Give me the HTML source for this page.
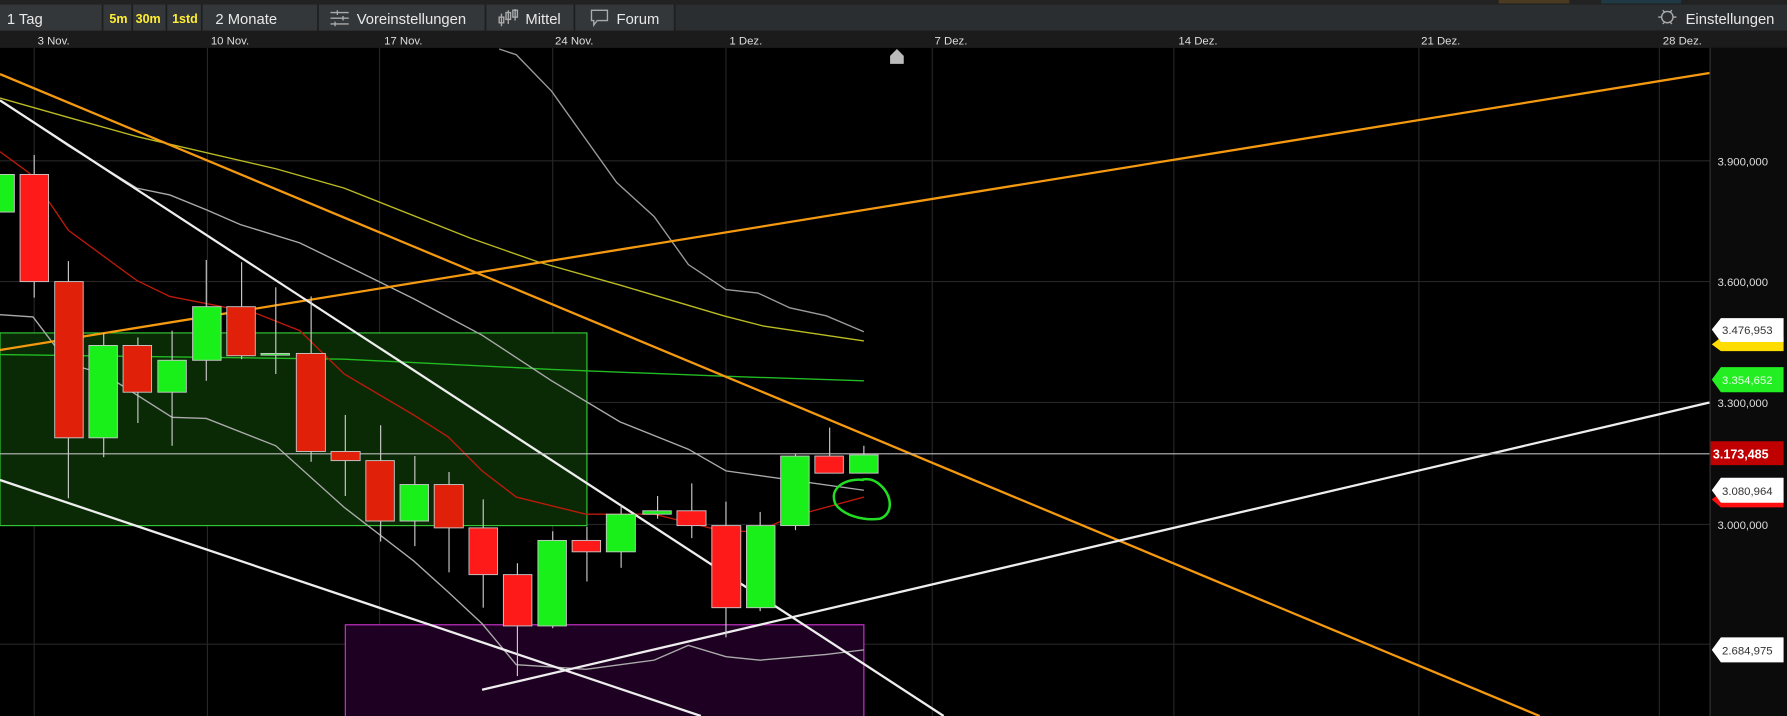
<!DOCTYPE html>
<html><head><meta charset="utf-8"><style>
html,body{margin:0;padding:0;background:#000;overflow:hidden}
svg{display:block}
text{font-family:"Liberation Sans",sans-serif}
</style></head><body>
<svg width="1787" height="716" viewBox="0 0 1568 628" preserveAspectRatio="none" xmlns="http://www.w3.org/2000/svg">
<rect x="0" y="0" width="1568" height="628" fill="#000"/>
<rect x="0" y="0" width="1568" height="4" fill="#222"/>
<rect x="1315" y="0" width="62" height="3" fill="#4a3a20"/>
<rect x="1405" y="0" width="70" height="3" fill="#1f3a44"/>
<rect x="0" y="4" width="1568" height="23" fill="#2b2e31"/>
<rect x="0" y="4" width="592" height="23" fill="#33373a"/>
<g stroke="#1c1e20" stroke-width="1.5">
<line x1="90" y1="4" x2="90" y2="27"/><line x1="116" y1="4" x2="116" y2="27"/>
<line x1="146" y1="4" x2="146" y2="27"/><line x1="177" y1="4" x2="177" y2="27"/>
<line x1="279" y1="4" x2="279" y2="27"/><line x1="426" y1="4" x2="426" y2="27"/>
<line x1="504" y1="4" x2="504" y2="27"/><line x1="592" y1="4" x2="592" y2="27"/>
</g>
<g font-size="13" fill="#e8e8e8">
<text x="6" y="21">1 Tag</text>
<text x="96" y="20" font-size="11" fill="#ffee33" font-weight="bold">5m</text>
<text x="119" y="20" font-size="11" fill="#ffee33" font-weight="bold">30m</text>
<text x="151" y="20" font-size="11" fill="#ffee33" font-weight="bold">1std</text>
<text x="189" y="21">2 Monate</text>
<text x="313" y="21">Voreinstellungen</text>
<text x="461" y="21">Mittel</text>
<text x="541" y="21">Forum</text>
<text x="1479" y="21">Einstellungen</text>
</g>
<g stroke="#aaa" stroke-width="1.2" fill="none">
<line x1="290" y1="11" x2="306" y2="11"/><line x1="290" y1="16" x2="306" y2="16"/><line x1="290" y1="21" x2="306" y2="21"/>
<line x1="296" y1="9" x2="296" y2="13"/><line x1="301" y1="14" x2="301" y2="18"/><line x1="294" y1="19" x2="294" y2="23"/>
<line x1="440" y1="12" x2="440" y2="23"/><rect x="438" y="15" width="4" height="5"/>
<line x1="446" y1="9" x2="446" y2="21"/><rect x="444" y="11" width="4" height="6"/>
<line x1="452" y1="8" x2="452" y2="18"/><rect x="450" y="9" width="4" height="6"/>
<path d="M519 9h14v9h-9l-3 4v-4h-2z"/>
<circle cx="1463" cy="15" r="5"/>
<path d="M1455 15h3M1468 15h3M1459 9l2 2M1467 9l-2 2M1459 21l2-2M1467 21l-2-2"/>
</g>
<rect x="0" y="27" width="1568" height="15" fill="#1b1b1b"/>
<g font-size="10" fill="#ddd">
<text x="33" y="39">3 Nov.</text><text x="185" y="39">10 Nov.</text><text x="337" y="39">17 Nov.</text>
<text x="487" y="39">24 Nov.</text><text x="640" y="39">1 Dez.</text><text x="820" y="39">7 Dez.</text>
<text x="1034" y="39">14 Dez.</text><text x="1247" y="39">21 Dez.</text><text x="1459" y="39">28 Dez.</text>
</g>
<rect x="1500" y="42" width="68" height="586" fill="#0b0b0b"/>
<line x1="1500.5" y1="42" x2="1500.5" y2="628" stroke="#333"/>
<g stroke="#262626" stroke-width="1">
<line x1="30" y1="42" x2="30" y2="628"/><line x1="182" y1="42" x2="182" y2="628"/>
<line x1="333" y1="42" x2="333" y2="628"/><line x1="485" y1="42" x2="485" y2="628"/>
<line x1="637" y1="42" x2="637" y2="628"/><line x1="818" y1="42" x2="818" y2="628"/>
<line x1="1030" y1="42" x2="1030" y2="628"/><line x1="1245" y1="42" x2="1245" y2="628"/>
<line x1="1456" y1="42" x2="1456" y2="628"/>
<line x1="0" y1="141" x2="1500" y2="141"/><line x1="0" y1="247" x2="1500" y2="247"/>
<line x1="0" y1="353" x2="1500" y2="353"/><line x1="0" y1="460" x2="1500" y2="460"/>
<line x1="0" y1="565" x2="1500" y2="565"/>
</g>
<g font-size="10" fill="#ddd">
<text x="1507" y="145">3.900,000</text><text x="1507" y="251">3.600,000</text>
<text x="1507" y="357">3.300,000</text><text x="1507" y="464">3.000,000</text>
</g>
<rect x="0" y="292" width="515" height="169" fill="#0a2a06" stroke="#33cc33" stroke-width="1"/>
<rect x="303" y="548" width="455" height="82" fill="#1e0022" stroke="#cc33cc" stroke-width="1"/>
<g fill="none" stroke-width="1.2">
<polyline stroke="#9a9a9a" points="438,43 453,48 484,80 541,160 574,190 604,232 637,254 665,257 693,270 725,277 758,291"/>
<polyline stroke="#bbbb22" points="0,86 60,103 121,120 242,148 302,165 413,209 473,230 544,250 635,277 670,286 758,299"/>
<polyline stroke="#22bb22" points="0,311 302,315 484,324 635,330 758,334"/>
<polyline stroke="#aaa" points="0,88 60,128 120,165 149,171 181,184 211,197 263,213 302,232 363,262 423,294 484,334 544,370 604,394 637,413 758,430"/>
<polyline stroke="#aaa" points="0,276 29,278 60,319 91,328 151,366 181,367 242,391 302,445 363,492 393,519 423,547 453,583 484,585 514,587 574,579 604,566 637,576 667,579 725,574 758,570"/>
<polyline stroke="#bb1a0a" points="0,133 26,152 60,202 120,246 149,260 190,268 225,275 263,290 302,328 363,364 393,383 423,413 453,436 514,451 574,451 635,466 665,466 695,453 758,436"/>
</g>
<g fill="none">
<line x1="0" y1="307" x2="1500" y2="64" stroke="#f59a10" stroke-width="2"/>
<line x1="0" y1="65" x2="1351" y2="628" stroke="#f59a10" stroke-width="2"/>
<line x1="0" y1="88" x2="828" y2="628" stroke="#eee" stroke-width="2"/>
<line x1="0" y1="421" x2="615" y2="628" stroke="#eee" stroke-width="2"/>
<line x1="423" y1="605" x2="1500" y2="353" stroke="#eee" stroke-width="2"/>
<line x1="0" y1="398" x2="1500" y2="398" stroke="#bbb" stroke-width="1"/>
</g>
<g stroke="#ccc" stroke-width="1">
<line x1="30" y1="136" x2="30" y2="261"/><line x1="60" y1="229" x2="60" y2="437"/>
<line x1="91" y1="292" x2="91" y2="401"/><line x1="121" y1="296" x2="121" y2="371"/>
<line x1="151" y1="290" x2="151" y2="391"/><line x1="181" y1="228" x2="181" y2="334"/>
<line x1="212" y1="230" x2="212" y2="315"/><line x1="242" y1="252" x2="242" y2="328"/>
<line x1="273" y1="260" x2="273" y2="405"/><line x1="303" y1="364" x2="303" y2="435"/>
<line x1="334" y1="373" x2="334" y2="475"/><line x1="364" y1="400" x2="364" y2="479"/>
<line x1="394" y1="414" x2="394" y2="502"/><line x1="424" y1="438" x2="424" y2="533"/>
<line x1="454" y1="494" x2="454" y2="593"/><line x1="485" y1="466" x2="485" y2="551"/>
<line x1="515" y1="462" x2="515" y2="510"/><line x1="545" y1="443" x2="545" y2="498"/>
<line x1="577" y1="435" x2="577" y2="455"/><line x1="607" y1="424" x2="607" y2="472"/>
<line x1="637" y1="440" x2="637" y2="559"/><line x1="667" y1="449" x2="667" y2="536"/>
<line x1="698" y1="398" x2="698" y2="465"/><line x1="728" y1="375" x2="728" y2="415"/>
<line x1="758" y1="391" x2="758" y2="415"/>
</g>
<g stroke="#c8c8c8" stroke-width="0.8">
<rect x="-5" y="153" width="17.6" height="33" fill="#19f019"/>
<rect x="17.6" y="153" width="25" height="94" fill="#ff1a1a"/>
<rect x="48" y="247" width="25" height="137" fill="#e02008"/>
<rect x="78" y="303" width="25" height="81" fill="#19f019"/>
<rect x="108" y="303" width="25" height="41" fill="#e02008"/>
<rect x="138.5" y="316" width="25" height="28" fill="#19f019"/>
<rect x="169" y="269" width="25" height="47" fill="#19f019"/>
<rect x="199" y="269" width="25" height="43" fill="#e02008"/>
<rect x="229" y="310" width="25" height="1.5" fill="#19f019"/>
<rect x="260" y="310" width="25.5" height="86" fill="#e02008"/>
<rect x="290.5" y="396" width="25.5" height="8" fill="#e02008"/>
<rect x="321" y="404" width="25" height="53" fill="#e02008"/>
<rect x="351" y="425" width="25" height="32" fill="#19f019"/>
<rect x="381" y="425" width="25.5" height="38" fill="#e02008"/>
<rect x="411.5" y="463" width="25" height="41" fill="#ff1a1a"/>
<rect x="441.7" y="504" width="25" height="45" fill="#ff1a1a"/>
<rect x="472" y="474" width="25" height="75" fill="#19f019"/>
<rect x="502" y="474" width="25" height="10" fill="#ff1a1a"/>
<rect x="532" y="451" width="25.5" height="33" fill="#19f019"/>
<rect x="564" y="448" width="25" height="3" fill="#19f019"/>
<rect x="594" y="448" width="25.5" height="13" fill="#ff1a1a"/>
<rect x="624.6" y="461" width="25.4" height="72" fill="#ff1a1a"/>
<rect x="655" y="461" width="25" height="72" fill="#19f019"/>
<rect x="685" y="400" width="25" height="61" fill="#19f019"/>
<rect x="715" y="400" width="25" height="15" fill="#ff1a1a"/>
<rect x="745.5" y="399" width="25" height="16" fill="#19f019"/>
</g>
<path d="M758 421 C742 419 727 428 733 442 C740 452 757 457 772 455 C784 451 783 435 773 426 C768 421 762 419 755 421" fill="none" stroke="#22dd22" stroke-width="2.2"/>
<path d="M781 56 L781 49 L787 43 L793 49 L793 56 Z" fill="#bbb"/>
<g font-size="10">
<path d="M1510 296 L1565 296 L1565 308 L1510 308 L1502 302 Z" fill="#ffdd00"/>
<path d="M1510 279 L1565 279 L1565 300 L1510 300 L1502 289 Z" fill="#fff"/>
<text x="1511" y="293" fill="#333">3.476,953</text>
<path d="M1510 322 L1565 322 L1565 344 L1510 344 L1502 333 Z" fill="#22ee22"/>
<text x="1511" y="337" fill="#e8ffe8">3.354,652</text>
<path d="M1501 387 L1565 387 L1565 408 L1501 408 Z" fill="#c00000"/>
<text x="1503" y="402" fill="#fff" font-weight="bold" font-size="11">3.173,485</text>
<path d="M1510 432 L1565 432 L1565 445 L1510 445 L1502 438 Z" fill="#ff1010"/>
<path d="M1510 419 L1565 419 L1565 441 L1510 441 L1502 430 Z" fill="#fff"/>
<text x="1511" y="434" fill="#333">3.080,964</text>
<path d="M1510 559 L1565 559 L1565 581 L1510 581 L1502 570 Z" fill="#fff"/>
<text x="1511" y="574" fill="#333">2.684,975</text>
</g>
</svg>
</body></html>
